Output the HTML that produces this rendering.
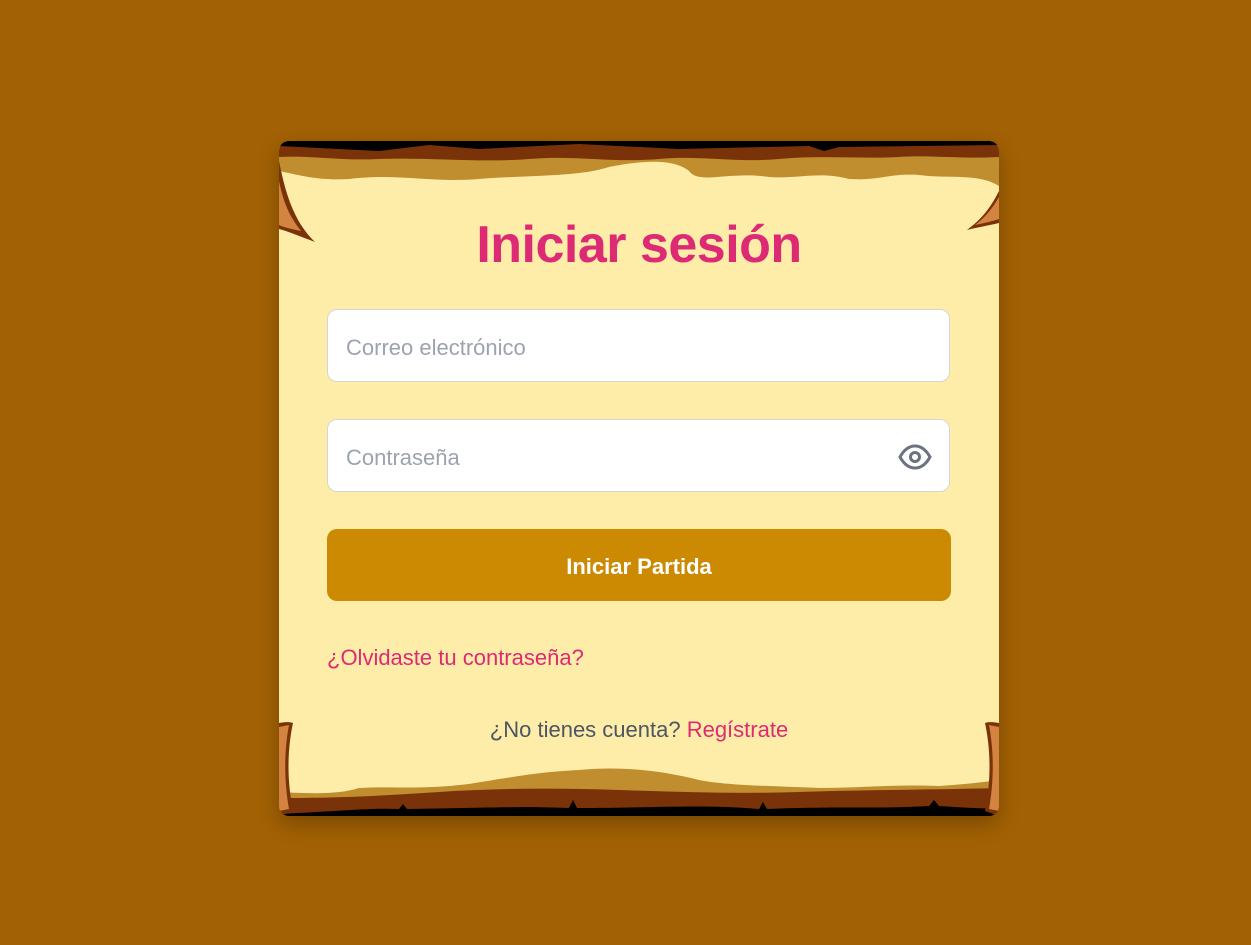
<!DOCTYPE html>
<html><head><meta charset="utf-8"><style>
body{margin:0;width:1251px;height:945px;background:#a26104;font-family:"Liberation Sans",sans-serif;position:relative;overflow:hidden}
.card{position:absolute;left:279px;top:141px;width:720px;height:675px;background:#feeda9;border-radius:10px;overflow:hidden;box-shadow:0 8px 20px rgba(0,0,0,.25)}
svg{position:absolute;left:0}
h1{position:absolute;top:74px;left:0;width:720px;text-align:center;margin:0;font-size:52px;font-weight:bold;color:#dd2a74;letter-spacing:-0.5px}
.inp{position:absolute;left:48px;height:71px;background:#fff;border:1px solid #d6d6d0;border-radius:10px;font-size:22px;color:#9ca3af;line-height:75px;box-sizing:content-box;padding-left:18px;width:603px}
.btn{position:absolute;left:48px;top:388px;width:624px;height:72px;background:#cc8a02;border-radius:10px;color:#fff;font-weight:bold;font-size:22px;text-align:center;line-height:76px}
.link{position:absolute;left:48px;top:504px;font-size:22px;color:#dd2a74}
.bot{position:absolute;top:576px;left:0;width:720px;text-align:center;font-size:22px;color:#4b5563}
</style></head><body>
<div class="card">
<svg width="720" height="50" style="top:0" viewBox="0 0 720 50">
<path d="M0 0H720V45C700 32 670 38 640 34C610 32 600 40 570 38C540 30 520 38 490 36C450 30 420 44 410 30C400 22 380 16 330 26C300 36 250 34 200 38C150 42 120 32 70 38C40 40 20 34 0 30Z" fill="#c08e2e"/>
<path d="M0 0H720V16C680 18 650 14 620 16C580 18 540 14 500 18C460 22 420 14 380 18C330 22 300 14 250 18C200 22 150 16 100 18C60 20 30 14 0 16Z" fill="#7a3308"/>
<path d="M0 0H720V4L560 6L545 10L530 5L400 8L300 3L200 8L150 4L100 10L0 5Z" fill="#000"/>
</svg>
<svg width="40" height="110" style="top:0" viewBox="0 0 40 110"><path d="M0 20C6 50 14 80 36 101C20 95 8 90 0 88Z" fill="#7a3308"/><path d="M0 40C4 60 10 75 22 90C12 88 4 86 0 84Z" fill="#d38440"/></svg>
<svg width="40" height="110" style="top:40px;left:680px" viewBox="0 0 40 110"><path d="M40 10C30 30 20 40 8 49C20 46 32 44 40 42Z" fill="#7a3308"/><path d="M40 16C32 30 24 38 16 44C26 42 34 40 40 38Z" fill="#d38440"/></svg>
<svg width="720" height="70" style="top:605px" viewBox="0 0 720 70">
<path d="M0 46C40 48 60 48 80 42C120 40 140 44 190 38C240 30 260 26 300 24C340 20 380 24 420 34C450 40 500 40 540 42C580 42 620 38 660 40C690 38 705 36 720 34V70H0Z" fill="#c08e2e"/>
<path d="M0 52C60 52 100 50 160 46C220 42 280 42 340 44C400 46 460 48 520 46C580 44 640 44 720 42V70H0Z" fill="#7a3308"/>
<path d="M0 68C80 64 90 62 120 63L124 58L128 63C200 62 240 60 290 62L294 54L298 62C380 62 420 58 480 63L484 56L488 63C560 60 600 63 650 60L655 54L660 60C690 62 710 63 720 62V70H0Z" fill="#000"/>
</svg>
<svg width="30" height="100" style="top:580px" viewBox="0 0 30 100"><path d="M0 2C10 0 14 2 14 2C8 30 8 60 14 90L0 95Z" fill="#7a3308"/><path d="M0 6L10 4C5 30 5 60 10 88L0 90Z" fill="#d38440"/></svg>
<svg width="30" height="100" style="top:580px;left:690px" viewBox="0 0 30 100"><path d="M30 2C20 0 16 2 16 2C22 30 22 60 16 90L30 95Z" fill="#7a3308"/><path d="M30 6L20 4C25 30 25 60 20 88L30 90Z" fill="#d38440"/></svg>
<h1>Iniciar sesión</h1>
<div class="inp" style="top:168px">Correo electrónico</div>
<div class="inp" style="top:278px">Contraseña
<svg width="34" height="26" style="left:570px;top:24px" viewBox="0 0 34 26"><path d="M2 13C7 4 13 2 17 2S27 4 32 13C27 22 21 24 17 24S7 22 2 13Z" fill="none" stroke="#6b7280" stroke-width="3"/><circle cx="17" cy="13" r="4.5" fill="none" stroke="#6b7280" stroke-width="3"/></svg></div>
<div class="btn">Iniciar Partida</div>
<div class="link">¿Olvidaste tu contraseña?</div>
<div class="bot">¿No tienes cuenta? <span style="color:#dd2a74">Regístrate</span></div>
</div>
</body></html>
